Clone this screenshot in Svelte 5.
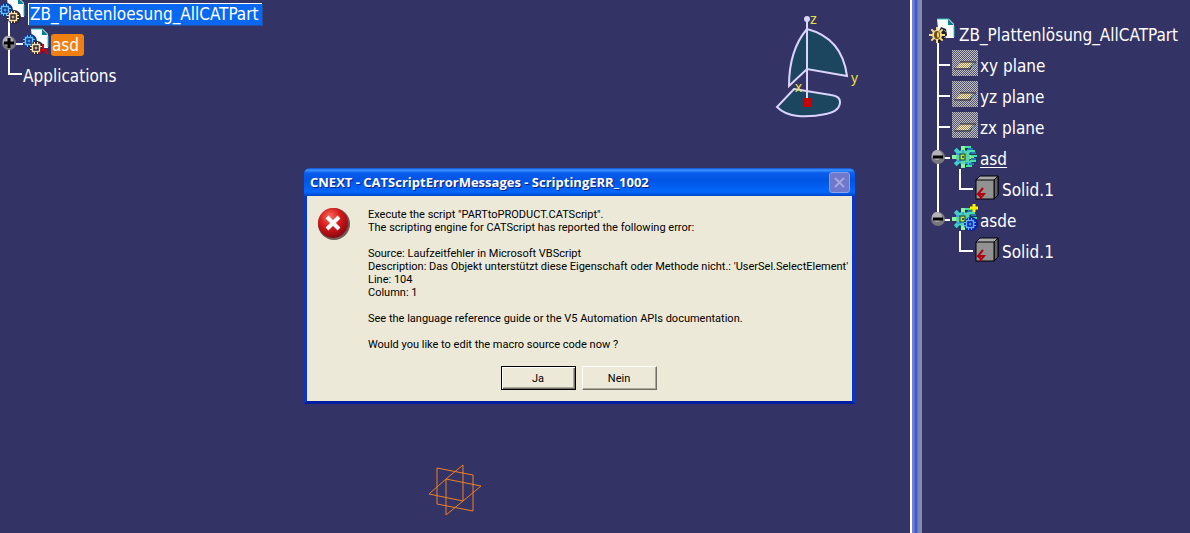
<script lang="ts">
    type Node = {
        label: string;
        icon: 'part'|'plane'|'body'|'bodyset'|'solid';
        depth: number;
        active?: boolean;
    };

    const partTree: Node[] = [
        { label: 'ZB_Plattenlösung_AllCATPart', icon: 'part', depth: 0 },
        { label: 'xy plane', icon: 'plane', depth: 1 },
        { label: 'yz plane', icon: 'plane', depth: 1 },
        { label: 'zx plane', icon: 'plane', depth: 1 },
        { label: 'asd', icon: 'body', depth: 1, active: true },
        { label: 'Solid.1', icon: 'solid', depth: 2 },
        { label: 'asde', icon: 'bodyset', depth: 1 },
        { label: 'Solid.1', icon: 'solid', depth: 2 }
    ];

    const message = `Execute the script "PARTtoPRODUCT.CATScript".
The scripting engine for CATScript has reported the following error:

Source: Laufzeitfehler in Microsoft VBScript
Description: Das Objekt unterstützt diese Eigenschaft oder Methode nicht.: 'UserSel.SelectElement'
Line: 104
Column: 1

See the language reference guide or the V5 Automation APIs documentation.

Would you like to edit the macro source code now ?`;

    const gutters = [7, 30, 52];
    const teeth = [0, 45, 90, 135, 180, 225, 270, 315];

    let open = $state(true);
</script>

{#snippet gear(x: number, y: number, r: number, fill: string)}
    <g transform="translate({x} {y})">
        {#each teeth as angle}
            <rect x="-1" y={-r - 3} width="2" height="4" fill={fill} transform="rotate({angle})" />
        {/each}
        <circle r={r} fill={fill} />
    </g>
{/snippet}

{#snippet hash(x: number, y: number, stroke: string, back: string)}
    <circle cx={x + 1} cy={y} r="7" fill={back} />
    <g transform="translate({x} {y})" stroke={stroke} fill="none">
        <rect x="-3.5" y="-3.5" width="7" height="7" stroke-width="1.5" />
        <path d="M-6 -1.5h3M-6 1.5h3M3 -1.5h3M3 1.5h3M-1.5 -6v3M1.5 -6v3M-1.5 3v3M1.5 3v3M-1.5 0h3M0 -1.5v3" />
    </g>
{/snippet}

{#snippet sheet(x: number, y: number)}
    <g transform="translate({x} {y})">
        <path d="M0 0h12l5 5v14H2z" fill="#fbffff" />
        <path d="M0 0h12M17 7v11" stroke="#27c0c4" fill="none" />
        <path d="M11 0l6 6h-6z" fill="#0a7f8c" />
    </g>
{/snippet}

{#snippet knob(x: number, y: number, plus: boolean)}
    <circle cx={x} cy={y} r="7" fill="#77777d" />
    <circle cx={x - 1} cy={y - 2} r="5" fill="#b4b4b8" />
    <path d="M{x - 5} {y}h10{plus ? `M${x} ${y - 5}v10` : ''}" stroke="#000" stroke-width="3" />
{/snippet}

{#snippet cogBody()}
    <circle cx="14" cy="12" r="11" fill="#0c3f5c" />
    <g fill="#62dda0">
        {#each teeth as angle}
            <rect x="9" y="1" width="4" height="6" fill={angle % 90 ? '#46c8d0' : '#8ff0a0'} transform="rotate({angle} 11 12)" />
        {/each}
    </g>
    <circle cx="11" cy="12" r="7" fill="#55d6a4" />
    <path d="M13 2h6M17 6h6M19 11h6M18 16h6M14 21h6" stroke="#45e0a8" stroke-width="2" />
    <path d="M16 4h5M19 8h5M19 14h5M17 19h5" stroke="#2878b8" stroke-width="2" />
    <path d="M4 9h4M5 16h4M11 5v3M13 18h3" stroke="#3aa4e8" stroke-width="2" />
    <rect x="8" y="9" width="5" height="6" fill="#b9e84a" stroke="#123c38" />
    <circle cx="11" cy="12" r="1" fill="#103030" />
{/snippet}

{#snippet icon(kind: string)}
    {#if kind === 'part'}
        <svg class="icon wide" viewBox="0 0 28 31">
            {@render sheet(8, -2)}
            <path d="M12 6l5 2l1 6l-3 5l-6 3l-3-3z" fill="#22222c" />
            <path d="M15 9l2 2M15 17l2-2" stroke="#8c8c90" />
            {@render gear(8, 14, 5, '#f8dc8c')}
            <ellipse cx="8" cy="14" rx="3" ry="4" fill="#6b4d16" />
            <ellipse cx="9" cy="14" rx="1" ry="3" fill="#ffe060" />
        </svg>
    {:else if kind === 'plane'}
        <svg class="icon" viewBox="0 0 26 31">
            <defs>
                <pattern id="dither" width="2" height="2" patternUnits="userSpaceOnUse">
                    <rect width="2" height="2" fill="#54546c" />
                    <path d="M0 0h1v1h-1zM1 1h1v1h-1z" fill="#c0c0c4" />
                </pattern>
                <pattern id="sand" width="2" height="2" patternUnits="userSpaceOnUse">
                    <rect width="2" height="2" fill="#988868" />
                    <path d="M0 0h1v1h-1zM1 1h1v1h-1z" fill="#fff0b8" />
                </pattern>
            </defs>
            <rect y="-2" width="26" height="26" fill="url(#dither)" shape-rendering="crispEdges" />
            <path d="M9 10h12l-5 6H4z" fill="url(#sand)" />
            <path d="M8 10h16M2 17h16l2-3" stroke="#22222c" fill="none" />
            <path d="M24 11l-5 6" stroke="#58a8a8" />
        </svg>
    {:else if kind === 'body'}
        <svg class="icon" viewBox="0 0 26 31">{@render cogBody()}</svg>
    {:else if kind === 'bodyset'}
        <svg class="icon" viewBox="0 0 26 31">
            {@render cogBody()}
            {@render hash(18, 17, '#5fb0ff', '#0a1fa8')}
            <path d="M18 1h8M22 -3v8" stroke="#fff200" stroke-width="3" />
        </svg>
    {:else}
        <svg class="icon" viewBox="0 0 26 31">
            <path d="M2 4l4-4h18v19l-4 4z" fill="#a8a8a8" stroke="#000" />
            <path d="M20 4l4-4v19l-4 4z" fill="#626266" stroke="#000" />
            <rect x="2" y="4" width="18" height="19" fill="#929292" stroke="#000" />
            <path d="M9 12l-5 6h6l-4 5M4 18l4 4" stroke="#b00010" stroke-width="2" fill="none" />
        </svg>
    {/if}
{/snippet}

<main class="screen">
    <section class="view">
        <ul class="tree">
            <li class="row">
                <svg class="gutter root" viewBox="0 0 28 31">
                    <path d="M9 20v12" stroke="#fff" stroke-width="2" />
                    {@render sheet(7, -2)}
                    {@render hash(5, 10, '#65c0ff', '#0b348c')}
                    {@render hash(13, 17, '#ffe2b0', '#2c2830')}
                </svg>
                <span class="label selected">ZB_Plattenloesung_AllCATPart</span>
            </li>
            <li class="row">
                <svg class="gutter child" viewBox="0 0 50 31">
                    <path d="M9 0v32M16 13h7" stroke="#fff" stroke-width="2" />
                    {@render knob(9, 12, true)}
                    {@render sheet(31, -2)}
                    {@render hash(29, 10, '#65c0ff', '#0b348c')}
                    {@render hash(36, 17, '#ffe2b0', '#2c2830')}
                    <path d="M43 13v5l-4 5M43 18l5 5M40 19h7" stroke="#c00818" stroke-width="2" fill="none" />
                </svg>
                <span class="label hot">asd</span>
            </li>
            <li class="row">
                <svg class="gutter leaf" viewBox="0 0 23 31">
                    <path d="M9 0v12h13" stroke="#fff" stroke-width="2" fill="none" />
                </svg>
                <span class="label">Applications</span>
            </li>
        </ul>

        <svg class="compass" viewBox="770 10 95 112">
            <g fill="#1c4560" stroke="#dcd4ff" stroke-width="2">
                <path d="M794 89l37 6q9 1 9 7q0 9-14 12q-14 3-28 2q-13-1-21-9z" />
                <path d="M807 29q35 9 40 47l-40-7l-18 17q0-36 18-57z" />
                <path d="M807 18v80" />
            </g>
            <circle cx="807" cy="19" r="3" fill="#dcd4ff" />
            <rect x="803" y="98" width="9" height="9" fill="#c80000" />
            <text x="810" y="24">z</text>
            <text x="851" y="83">y</text>
            <text x="795" y="92">x</text>
        </svg>

        <svg class="planes" viewBox="0 0 54 54">
            <path d="M9 5l36 7v36l-36-7zM18 16l35 7l-18 15l-34-7zM35 2v36l-17 14v-36z" />
        </svg>

        {#if open}
            <div class="dialog" role="alertdialog" aria-labelledby="title">
                <header>
                    <h1 id="title">CNEXT - CATScriptErrorMessages - ScriptingERR_1002</h1>
                    <button class="close" aria-label="Close" disabled>
                        <svg viewBox="0 0 19 19"><path d="M5 5l9 9M14 5l-9 9" /></svg>
                    </button>
                </header>
                <div class="content">
                    <div class="report">
                        <svg class="error" viewBox="0 0 34 34">
                            <defs>
                                <radialGradient id="ball" cx="0.4" cy="0.3" r="0.7">
                                    <stop offset="0" stop-color="#f4705c" />
                                    <stop offset="0.5" stop-color="#d81a1a" />
                                    <stop offset="1" stop-color="#8c0810" />
                                </radialGradient>
                            </defs>
                            <circle cx="16" cy="16" r="16" fill="#6f5b58" />
                            <circle cx="15" cy="15" r="15" fill="url(#ball)" />
                            <path d="M9 9l12 12M21 9l-12 12" stroke="#fff" stroke-width="4" />
                        </svg>
                        <p>{message}</p>
                    </div>
                    <div class="buttons">
                        <button class="default" onclick={() => open = false}>Ja</button>
                        <button onclick={() => open = false}>Nein</button>
                    </div>
                </div>
            </div>
        {/if}
    </section>

    <div class="splitter"></div>

    <aside class="part">
        <ul class="tree">
            {#each partTree as node, i}
                <li class="row">
                    <svg class="gutter" style:width="{gutters[node.depth]}px">
                        {#if i === 0}
                            <path d="M16 22v10" stroke="#fff" stroke-width="2" />
                        {:else if i < 6}
                            <path d="M16 0v32" stroke="#fff" stroke-width="2" />
                        {/if}
                        {#if node.depth === 2}
                            <path d="M38 -7v20h13" stroke="#fff" stroke-width="2" fill="none" />
                        {:else if node.depth === 1}
                            <path d="M16 13h12" stroke="#fff" stroke-width="2" />
                        {/if}
                        {#if i === 6}
                            <path d="M16 0v10" stroke="#fff" stroke-width="2" />
                        {/if}
                        {#if node.icon === 'body' || node.icon === 'bodyset'}
                            {@render knob(16, 12, false)}
                        {/if}
                    </svg>
                    {@render icon(node.icon)}
                    <span class="label" class:active={node.active}>{node.label}</span>
                </li>
            {/each}
        </ul>
    </aside>
</main>

<style>
    :global(body) {
        background-color: #333366;
    }

    .screen {
        display: flex;
        min-height: 100vh;
        overflow: hidden;
        background-color: #333366;
        color: white;
        font-family: "DejaVu Sans Condensed", Tahoma, sans-serif;
    }

    .view {
        flex: 1;
        position: relative;
    }

    .splitter {
        width: 12px;
        border-left: 2px solid white;
        box-sizing: border-box;
        background: linear-gradient(to right, #6f83d6 0 2px, #4a5ac0 3px 5px, #7088dc 6px 8px, #8c8c98 8px);
    }

    .part {
        width: 268px;
        padding-top: 21px;
    }

    .tree {
        list-style: none;
        margin: 0;
        padding: 0;
    }

    .row {
        display: flex;
        height: 31px;
    }

    .gutter {
        height: 31px;
        flex: none;
        overflow: visible;
    }

    .root {
        width: 28px;
    }

    .child {
        width: 50px;
    }

    .leaf {
        width: 23px;
    }

    .icon {
        width: 26px;
        height: 31px;
        flex: none;
        overflow: visible;
        margin-right: 2px;
    }

    .icon.wide {
        width: 28px;
    }

    .label {
        font-size: 17px;
        line-height: 22px;
        height: 22px;
        margin-top: 3px;
        white-space: nowrap;
    }

    .selected {
        background-color: #0a68f0;
        border: solid white;
        border-width: 1px 0 0 1px;
        box-sizing: border-box;
        line-height: 20px;
        padding: 0 3px 0 1px;
        box-shadow: 1px 1px #24509c;
    }

    .hot {
        background-color: #f08010;
        border-radius: 3px;
        padding: 0 5px 0 1px;
        margin-left: 1px;
    }

    .active {
        text-decoration: underline;
        text-underline-offset: 2px;
    }

    .compass {
        position: absolute;
        left: 770px;
        top: 10px;
        width: 95px;
        height: 112px;
    }

    .compass text {
        fill: #e8e040;
        font-family: "Liberation Sans", Arial, sans-serif;
        font-size: 14px;
    }

    .planes {
        position: absolute;
        left: 428px;
        top: 463px;
        width: 54px;
        height: 54px;
        fill: none;
        stroke: #f08020;
    }

    .dialog {
        position: absolute;
        left: 304px;
        top: 168px;
        width: 551px;
        box-sizing: border-box;
        border: solid #0a36c0;
        border-width: 0 3px 3px;
        border-bottom-color: #001ea0;
        border-radius: 6px 6px 0 0;
        background-color: #0a36c0;
        color: black;
    }

    header {
        display: flex;
        align-items: center;
        justify-content: space-between;
        height: 28px;
        margin: 0 -3px;
        padding: 0 5px 0 6px;
        border-radius: 6px 6px 0 0;
        background: linear-gradient(#0a50d0, #3c94ff 2px, #0a5cec 5px, #0054e4 12px, #0468fc 24px, #0044c8);
    }

    h1 {
        margin: 0;
        color: white;
        font: bold 13px "Open Sans", "Trebuchet MS", sans-serif;
        text-shadow: 1px 1px #0a2080;
        white-space: nowrap;
    }

    .close {
        width: 21px;
        height: 21px;
        padding: 0;
        border: 1px solid #8ea0e8;
        border-radius: 3px;
        background-color: #7078cc;
    }

    .close svg {
        display: block;
        width: 19px;
        height: 19px;
        stroke: #a4a8dc;
        stroke-width: 2;
    }

    .content {
        background-color: #ece9d8;
        padding: 12px 13px 11px 11px;
    }

    .report {
        display: flex;
        gap: 16px;
    }

    .error {
        width: 34px;
        height: 34px;
        flex: none;
    }

    p {
        margin: 0;
        font: 11px Roboto, Tahoma, sans-serif;
        line-height: 13px;
        white-space: pre;
    }

    .buttons {
        display: flex;
        justify-content: center;
        gap: 6px;
        margin-top: 15px;
    }

    .buttons button {
        width: 75px;
        height: 24px;
        padding: 0;
        font: 11px Roboto, Tahoma, sans-serif;
        color: black;
        background-color: #ece9d8;
        border: 1px solid;
        border-color: white #716f64 #716f64 white;
        box-shadow: inset -1px -1px #aca899;
    }

    .buttons .default {
        border-color: black;
        box-shadow: inset 1px 1px white, inset -1px -1px #716f64, inset -2px -2px #aca899;
    }
</style>
